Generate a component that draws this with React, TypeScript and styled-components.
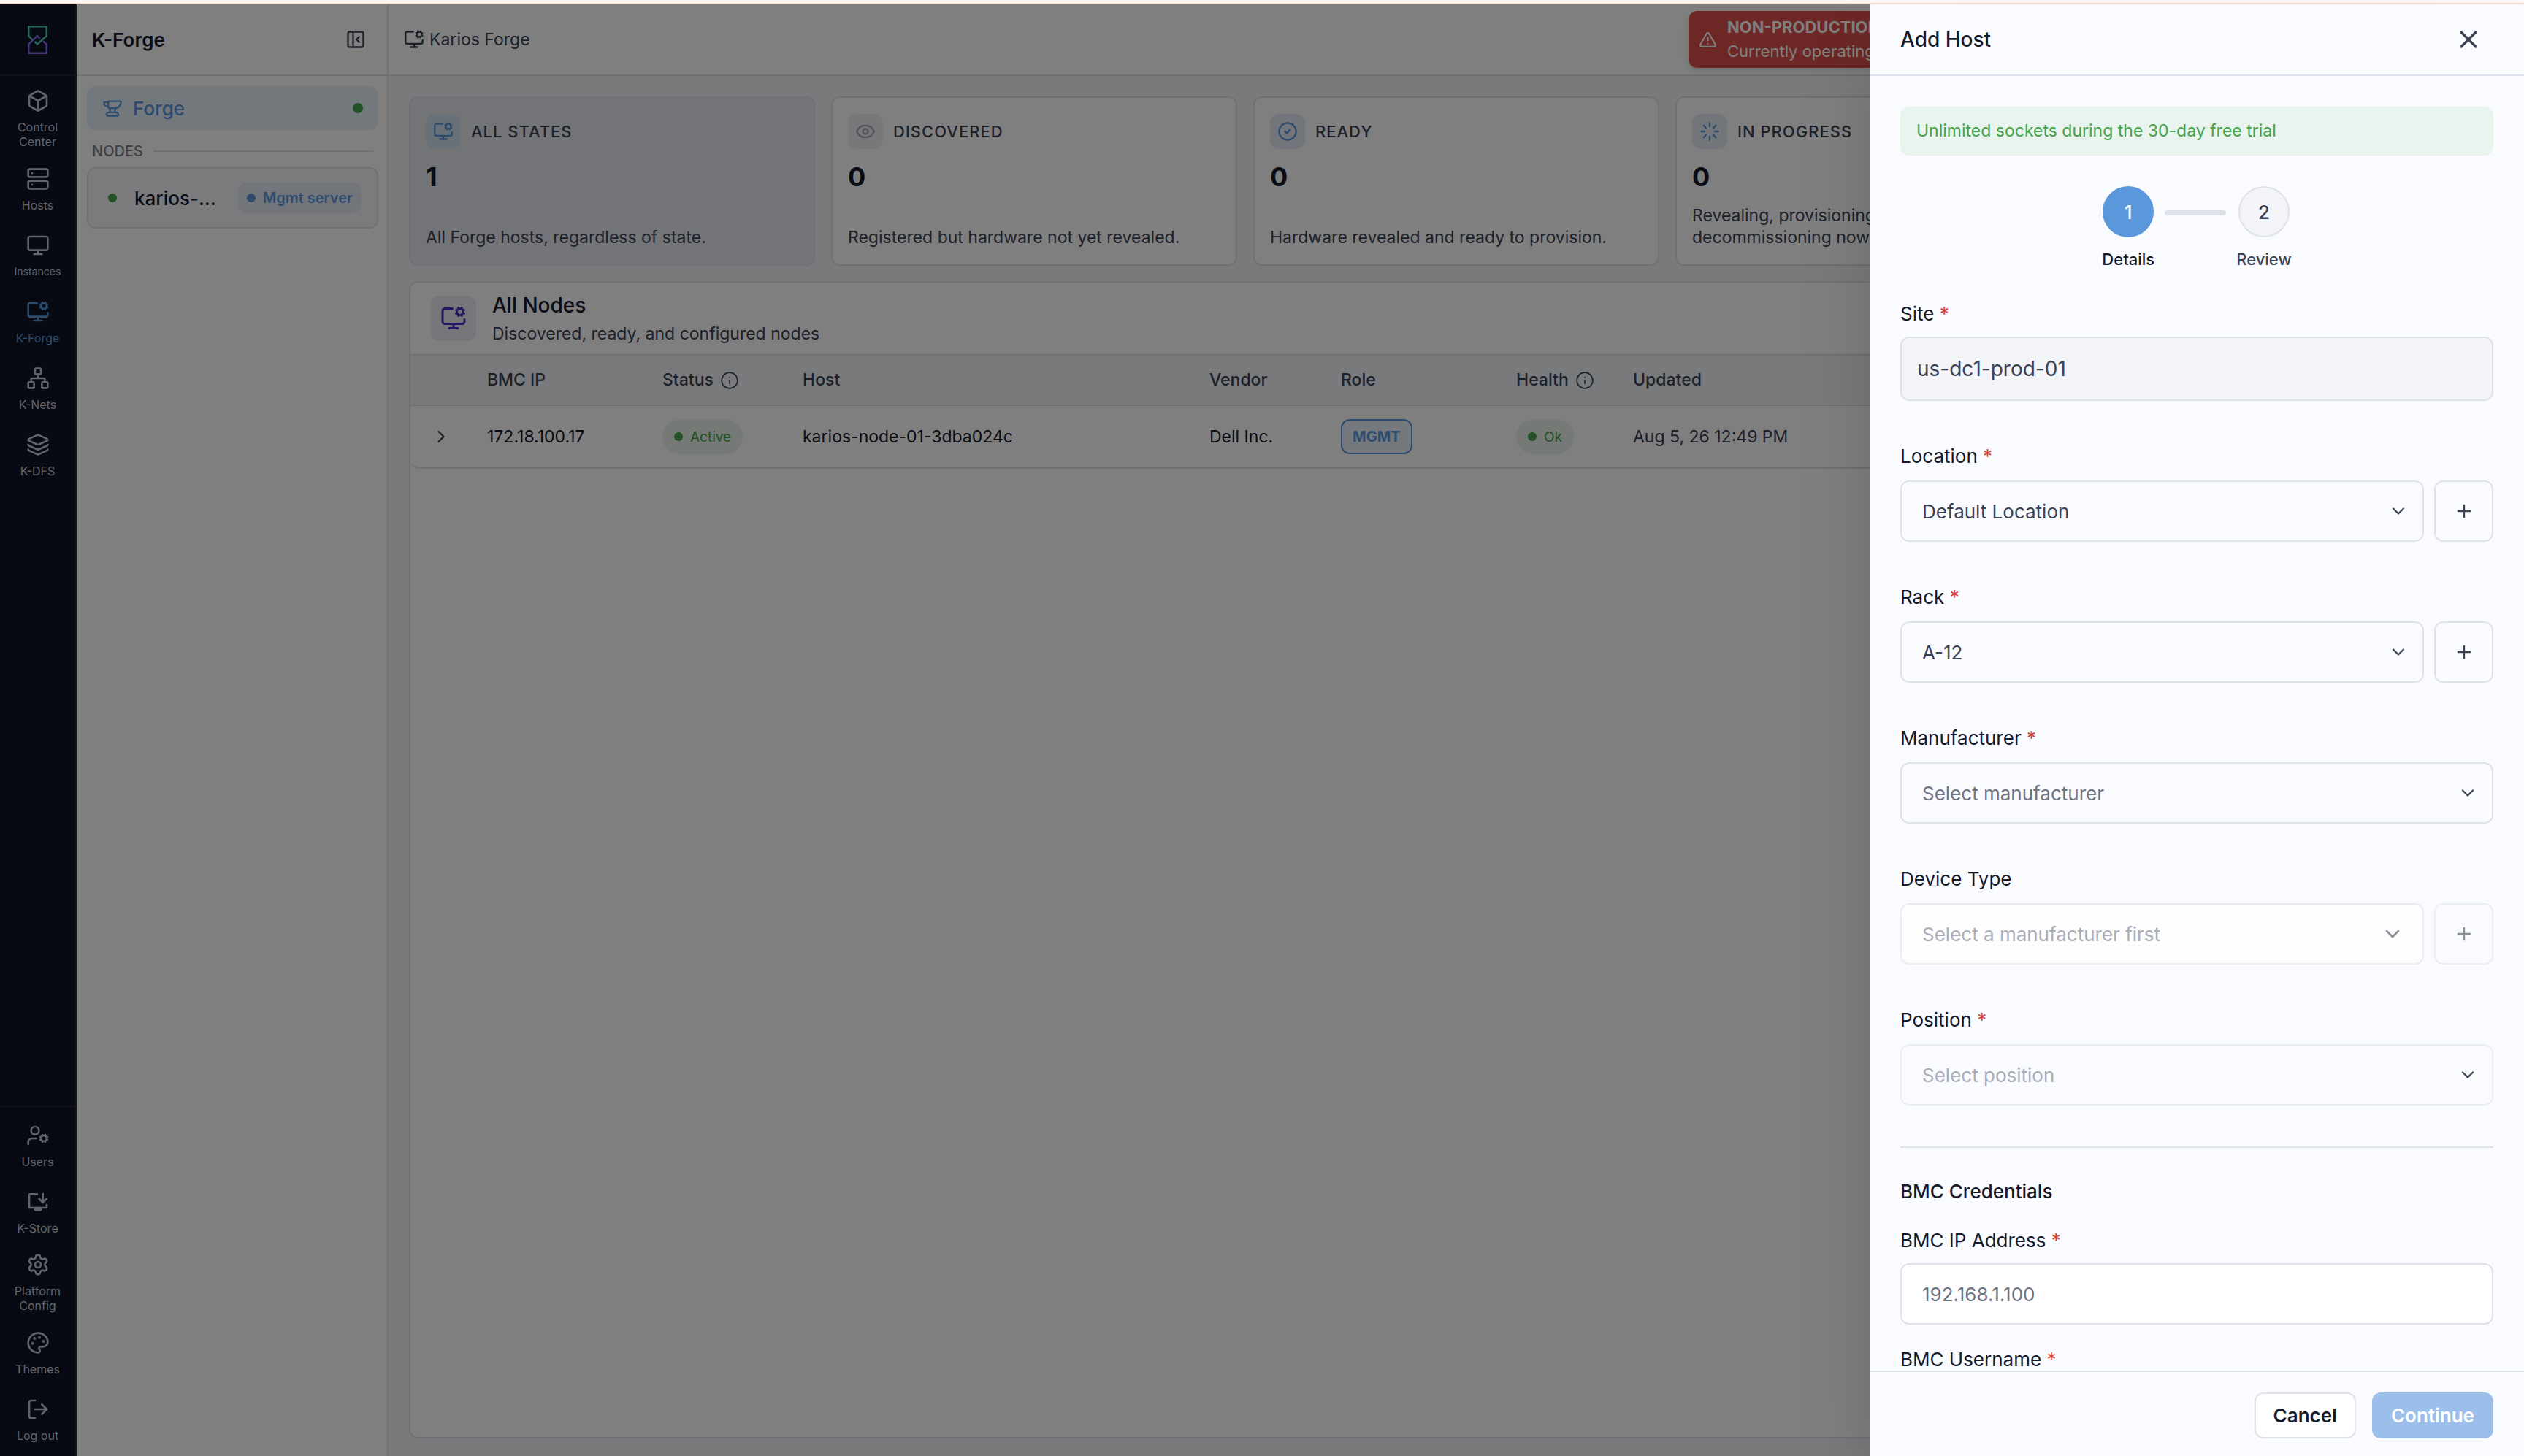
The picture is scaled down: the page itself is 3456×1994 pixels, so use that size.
import React, { useId } from "react";
import styled, { createGlobalStyle, css } from "styled-components";
import {
  Anvil,
  Box,
  ChevronDown,
  ChevronRight,
  CircleCheck,
  Eye,
  Info,
  Layers,
  Loader,
  LogOut,
  Monitor,
  MonitorCog,
  Network,
  Palette,
  PanelLeftClose,
  Plus,
  Server,
  Settings,
  TriangleAlert,
  UserCog,
  X,
} from "lucide-react";
import { MdInstallDesktop } from "react-icons/md";

const color = {
  ink: "#151a2b",
  text: "#3b4254",
  muted: "#6e7482",
  line: "#dfe2eb",
  surface: "#ffffff",
  canvas: "#f2f4f8",
  primary: "#5a97db",
  green: "#46a24d",
  red: "#d9403a",
  rail: "#0e1426",
};

const GlobalStyle = createGlobalStyle`
  *, *::before, *::after { box-sizing: border-box; }
  body {
    margin: 0;
    background: ${color.canvas};
    color: ${color.ink};
    font-family: Inter, "Liberation Sans", sans-serif;
    font-size: 26px;
    line-height: 39px;
  }
  button, input, select { font: inherit; color: inherit; margin: 0; }
  h1, h2, h3, p, ul, ol { margin: 0; padding: 0; }
  ul, ol { list-style: none; }
  svg { display: block; flex: none; }
`;

/* ---------- shell ---------- */

const Page = styled.div`
  display: flex;
  flex-direction: column;
  height: 100vh;
  overflow: hidden;
`;

const TopStrip = styled.div`
  flex: none;
  height: 6px;
  background: #fff9f6;
  border-bottom: 2px solid #f3ded3;
`;

const Shell = styled.div`
  position: relative;
  flex: 1;
  min-height: 0;
  display: flex;
`;

/* ---------- navigation rail ---------- */

const Rail = styled.nav`
  flex: none;
  width: 105px;
  display: flex;
  flex-direction: column;
  background: ${color.rail};
  border-right: 2px solid #20263a;
`;

const RailLogo = styled.div`
  height: 98px;
  display: flex;
  align-items: center;
  justify-content: center;
  border-bottom: 2px solid #20242f;
`;

const RailGroup = styled.ul`
  padding: 8px 0;
`;

const RailFooter = styled(RailGroup)`
  margin-top: auto;
  padding-bottom: 4px;
  border-top: 2px solid #20242f;
`;

const RailLink = styled.a<{ $active?: boolean; $small?: boolean }>`
  display: flex;
  flex-direction: column;
  align-items: center;
  justify-content: center;
  gap: 10px;
  min-height: 91px;
  padding: 10px 16px;
  color: ${(p) => (p.$active ? color.primary : "#c4c9d4")};
  font-size: ${(p) => (p.$small ? 14 : 16)}px;
  line-height: 20px;
  text-align: center;
  text-decoration: none;
`;

/* ---------- secondary panel ---------- */

const SidePanel = styled.aside`
  flex: none;
  width: 427px;
  background: ${color.surface};
  border-right: 2px solid ${color.line};
`;

const PanelHeader = styled.header`
  height: 98px;
  display: flex;
  align-items: center;
  justify-content: space-between;
  padding: 0 29px 0 21px;
  border-bottom: 2px solid ${color.line};
`;

const PanelTitle = styled.h1`
  font-size: 26px;
  line-height: 39px;
  font-weight: 600;
`;

const IconButton = styled.button`
  display: flex;
  align-items: center;
  justify-content: center;
  padding: 0;
  border: 0;
  background: none;
  color: ${color.text};
`;

const PanelBody = styled.div`
  padding: 14px 12px 14px 14px;
`;

const ForgeLink = styled.a`
  display: flex;
  align-items: center;
  gap: 14px;
  height: 60px;
  padding: 0 21px;
  border-radius: 12px;
  background: #e6f0fa;
  color: ${color.primary};
  font-weight: 500;
  text-decoration: none;
`;

const Dot = styled.span<{ $size: number; $color: string }>`
  flex: none;
  width: ${(p) => p.$size}px;
  height: ${(p) => p.$size}px;
  border-radius: 50%;
  background: ${(p) => p.$color};
`;

const Grow = styled.span`
  flex: 1;
`;

const SectionLabel = styled.h2`
  display: flex;
  align-items: center;
  gap: 14px;
  margin: 15px 7px 8px;
  color: #7c8290;
  font-size: 20px;
  line-height: 28px;
  font-weight: 500;

  &::after {
    content: "";
    flex: 1;
    height: 2px;
    background: ${color.line};
  }
`;

const NodeLink = styled.a`
  display: flex;
  align-items: center;
  height: 84px;
  padding: 0 21px 0 27px;
  border: 2px solid ${color.line};
  border-radius: 12px;
  background: #f6f7fa;
  color: ${color.ink};
  font-weight: 500;
  text-decoration: none;
`;

const NodeName = styled.span`
  flex: 1;
  min-width: 0;
  padding-left: 24px;
`;

const ServerBadge = styled.span`
  display: flex;
  align-items: center;
  gap: 10px;
  height: 42px;
  padding: 0 12px;
  border-radius: 12px;
  background: #e4ecf6;
  color: ${color.primary};
  font-size: 20px;
  font-weight: 600;
  white-space: nowrap;
`;

/* ---------- main area ---------- */

const Main = styled.main`
  flex: 1;
  min-width: 0;
  display: flex;
  flex-direction: column;
`;

const MainHeader = styled.header`
  flex: none;
  height: 98px;
  display: flex;
  align-items: center;
  justify-content: space-between;
  padding: 0 21px;
  background: ${color.surface};
  border-bottom: 2px solid ${color.line};
`;

const Crumb = styled.div`
  display: flex;
  align-items: center;
  gap: 7px;
  color: ${color.text};
  font-size: 23px;
`;

const Notice = styled.div`
  flex: 0 1 1123px;
  display: flex;
  align-items: center;
  gap: 14px;
  height: 78px;
  padding: 0 14px;
  border-radius: 12px;
  background: #da504c;
  color: #ffffff;
  font-size: 22px;
  line-height: 33px;
  box-shadow: 0 4px 12px rgba(0, 0, 0, 0.12);
`;

const NoticeTitle = styled.strong`
  display: block;
  font-weight: 700;
`;

const Content = styled.div`
  flex: 1;
  min-height: 0;
  display: flex;
  flex-direction: column;
  gap: 21px;
  padding: 28px 28px 24px;
`;

const StatGrid = styled.div`
  display: grid;
  grid-template-columns: repeat(5, minmax(0, 1fr));
  gap: 22px;
`;

const StatCard = styled.button<{ $selected?: boolean }>`
  display: flex;
  flex-direction: column;
  align-items: stretch;
  min-height: 232px;
  padding: 22px 21px;
  border: 2px solid ${color.line};
  border-radius: 12px;
  background: ${(p) => (p.$selected ? "#e7e9f1" : color.surface)};
  text-align: left;
`;

const StatHead = styled.span`
  display: flex;
  align-items: center;
  gap: 14px;
  color: ${color.text};
  font-size: 22px;
  font-weight: 500;
  letter-spacing: 1px;
`;

const StatIcon = styled.span<{ $bg: string; $fg: string }>`
  display: flex;
  align-items: center;
  justify-content: center;
  width: 48px;
  height: 48px;
  border-radius: 12px;
  background: ${(p) => p.$bg};
  color: ${(p) => p.$fg};
`;

const StatValue = styled.span`
  margin-top: 16px;
  color: ${color.ink};
  font-size: 36px;
  line-height: 44px;
  font-weight: 700;
`;

const StatText = styled.span`
  margin-top: auto;
  color: ${color.text};
  font-size: 23px;
  line-height: 30px;
`;

const TableCard = styled.section`
  flex: 1;
  min-height: 0;
  border: 2px solid ${color.line};
  border-radius: 12px;
  background: ${color.surface};
  overflow: hidden;
`;

const TableHeader = styled.header`
  display: flex;
  align-items: center;
  gap: 22px;
  height: 100px;
  padding: 0 28px;
  border-bottom: 2px solid #e0e0ea;
`;

const TableIcon = styled.span`
  display: flex;
  align-items: center;
  justify-content: center;
  width: 62px;
  height: 62px;
  border-radius: 12px;
  background: #eeeef6;
  color: #4f2fc4;
`;

const TableTitle = styled.h2`
  font-size: 28px;
  line-height: 42px;
  font-weight: 500;
`;

const TableText = styled.p`
  color: ${color.text};
  font-size: 23px;
  line-height: 36px;
`;

const TableWrap = styled.div`
  border-bottom: 2px solid #e0e0ea;
  border-radius: 0 0 12px 12px;
  overflow: hidden;
`;

const Table = styled.table`
  width: 100%;
  table-layout: fixed;
  border-collapse: collapse;
  font-size: 23px;
  text-align: left;
`;

const Col = styled.col<{ $width?: number }>`
  width: ${(p) => (p.$width ? `${p.$width}px` : "auto")};
`;

const Th = styled.th`
  height: 68px;
  padding: 0;
  border-bottom: 2px solid #e0e0ea;
  background: ${color.canvas};
  color: ${color.text};
  font-weight: 500;
`;

const ThLabel = styled.span`
  display: flex;
  align-items: center;
  gap: 9px;
`;

const Td = styled.td<{ $soft?: boolean }>`
  height: 85px;
  padding: 0;
  color: ${(p) => (p.$soft ? color.text : color.ink)};
`;

const Expand = styled(IconButton)`
  margin-left: 28px;
`;

const StatusPill = styled.span`
  display: inline-flex;
  align-items: center;
  gap: 10px;
  height: 48px;
  padding: 0 16px;
  border-radius: 24px;
  background: #eaf4ec;
  color: ${color.green};
  font-size: 19px;
  vertical-align: middle;
`;

const RoleTag = styled.span`
  display: inline-flex;
  align-items: center;
  height: 48px;
  padding: 0 14px;
  border: 2px solid ${color.primary};
  border-radius: 12px;
  background: #eaf2fb;
  color: ${color.primary};
  font-size: 20px;
  font-weight: 700;
  vertical-align: middle;
`;

/* ---------- drawer ---------- */

const Overlay = styled.div`
  position: absolute;
  inset: 0;
  display: flex;
  justify-content: flex-end;
  background: rgba(0, 0, 0, 0.5);
`;

const Drawer = styled.section`
  display: flex;
  flex-direction: column;
  width: 896px;
  max-width: 100%;
  background: #fafbfe;
  box-shadow: 0 50px 100px -24px rgba(0, 0, 0, 0.25);
`;

const DrawerHeader = styled.header`
  flex: none;
  display: flex;
  align-items: center;
  justify-content: space-between;
  height: 98px;
  padding: 0 42px;
  border-bottom: 2px solid #dde3ec;
`;

const DrawerTitle = styled.h2`
  font-size: 28px;
  font-weight: 500;
`;

const CloseButton = styled(IconButton)`
  width: 68px;
  height: 68px;
`;

const DrawerBody = styled.form`
  flex: 1;
  min-height: 0;
  padding: 42px 42px 0;
  overflow-y: auto;
  scrollbar-width: none;
`;

const TrialNote = styled.p`
  padding: 14px 22px;
  border-radius: 12px;
  background: #eaf4ee;
  color: ${color.green};
  font-size: 23px;
`;

const Steps = styled.ol`
  display: flex;
  justify-content: center;
  gap: 14px;
  margin: 42px 0 38px;
`;

const Step = styled.li<{ $current?: boolean }>`
  display: flex;
  flex-direction: column;
  align-items: center;
  gap: 14px;
  color: ${(p) => (p.$current ? color.ink : color.text)};
  font-size: 22px;
  line-height: 33px;
  font-weight: 500;
`;

const StepCircle = styled.span<{ $current?: boolean }>`
  display: flex;
  align-items: center;
  justify-content: center;
  width: 70px;
  height: 70px;
  border: 2px solid ${(p) => (p.$current ? color.primary : color.line)};
  border-radius: 50%;
  background: ${(p) => (p.$current ? color.primary : "#f3f4f8")};
  color: ${(p) => (p.$current ? "#ffffff" : color.text)};
  font-size: 26px;
`;

const StepLine = styled.li`
  width: 84px;
  height: 7px;
  margin-top: 33px;
  border-radius: 4px;
  background: #dde1ea;
`;

const FieldBox = styled.div<{ $gap: number }>`
  display: flex;
  flex-direction: column;
  gap: ${(p) => p.$gap}px;
`;

const Label = styled.label`
  font-weight: 400;
`;

const Required = styled.span`
  color: ${color.red};
`;

const FieldRow = styled.div`
  display: flex;
  gap: 14px;
`;

const SelectBox = styled.div`
  position: relative;
  flex: 1;
`;

const controlFrame = css`
  width: 100%;
  height: 84px;
  border: 2px solid ${color.line};
  border-radius: 12px;
  outline: 0;
`;

const Select = styled.select<{ $tone: "value" | "empty" | "faded" | "off" }>`
  ${controlFrame}
  display: block;
  padding: 0 64px 0 28px;
  appearance: none;
  background: ${(p) => (p.$tone === "off" ? "#fdfdfe" : "#fafbfe")};
  border-color: ${(p) =>
    p.$tone === "off" || p.$tone === "faded" ? "#ebedf4" : color.line};
  color: ${(p) =>
    p.$tone === "value"
      ? color.text
      : p.$tone === "empty"
        ? color.muted
        : "#a9adb7"};
  opacity: 1;
`;

const Chevron = styled.span<{ $large?: boolean }>`
  position: absolute;
  inset: 0 ${(p) => (p.$large ? 27 : 21)}px 0 auto;
  display: flex;
  align-items: center;
  color: ${(p) => (p.$large ? "#8a8e98" : color.text)};
  pointer-events: none;
`;

const AddButton = styled.button`
  flex: none;
  display: flex;
  align-items: center;
  justify-content: center;
  width: 81px;
  height: 84px;
  padding: 0;
  border: 2px solid ${color.line};
  border-radius: 12px;
  background: #fafbfe;
  color: ${color.text};

  &:disabled {
    border-color: #ebedf4;
    color: #8a8e98;
  }
`;

const TextInput = styled.input`
  ${controlFrame}
  padding: 0 28px;
  background: #ffffff;

  &::placeholder {
    color: ${color.muted};
    opacity: 1;
  }
`;

const ReadOnlyInput = styled.input`
  ${controlFrame}
  height: 88px;
  padding: 0 21px;
  background: #f3f4f8;
  color: ${color.text};
  font-size: 28px;
`;

const FieldStack = styled.div`
  display: flex;
  flex-direction: column;
  gap: 56px;
`;

const Credentials = styled.div`
  display: flex;
  flex-direction: column;
  gap: 28px;
  margin-top: 56px;
  padding: 40px 0 42px;
  border-top: 2px solid ${color.line};
`;

const SectionTitle = styled.h3`
  font-size: 26px;
  line-height: 39px;
  font-weight: 500;
`;

const DrawerFooter = styled.footer`
  flex: none;
  display: flex;
  justify-content: flex-end;
  gap: 22px;
  padding: 28px 42px 24px;
  border-top: 2px solid #dde3ec;
`;

const ActionButton = styled.button<{ $primary?: boolean }>`
  height: 63px;
  padding: 0 24px;
  border: 2px solid ${(p) => (p.$primary ? "#9bbfea" : color.line)};
  border-radius: 12px;
  background: ${(p) => (p.$primary ? "#9bbfea" : "#ffffff")};
  color: ${(p) => (p.$primary ? "#ffffff" : color.ink)};
  font-weight: 600;
`;

/* ---------- parts ---------- */

function Logo() {
  return (
    <svg width="27" height="39" viewBox="0 0 27 39" fill="none" strokeWidth="2.4">
      <path d="M21 21.2 25.7 26V37.7H1.3V25.6L13 14l3.6 3.8" stroke="#8b6cf2" />
      <path d="M6.2 19.4 1.3 14.2V1.3h24.4v12.9L13 25.6l-3.4-3.8" stroke="#50d2c2" />
    </svg>
  );
}

const mainNav = [
  { label: "Control Center", icon: <Box size={32} /> },
  { label: "Hosts", icon: <Server size={32} /> },
  { label: "Instances", icon: <Monitor size={32} />, small: true },
  { label: "K-Forge", icon: <MonitorCog size={32} />, active: true },
  { label: "K-Nets", icon: <Network size={32} /> },
  { label: "K-DFS", icon: <Layers size={32} /> },
];

const footerNav = [
  { label: "Users", icon: <UserCog size={32} /> },
  { label: "K-Store", icon: <MdInstallDesktop size={32} /> },
  { label: "Platform Config", icon: <Settings size={32} /> },
  { label: "Themes", icon: <Palette size={32} /> },
  { label: "Log out", icon: <LogOut size={32} /> },
];

type NavItem = {
  label: string;
  icon: React.ReactNode;
  small?: boolean;
  active?: boolean;
};

function NavItems({ items }: { items: NavItem[] }) {
  return (
    <>
      {items.map((item) => (
        <li key={item.label}>
          <RailLink href="#" $active={item.active} $small={item.small}>
            {item.icon}
            {item.label}
          </RailLink>
        </li>
      ))}
    </>
  );
}

const stats = [
  {
    title: "ALL STATES",
    value: 1,
    text: "All Forge hosts, regardless of state.",
    icon: <MonitorCog size={28} />,
    bg: "#d5e1f0",
    fg: color.primary,
    selected: true,
  },
  {
    title: "DISCOVERED",
    value: 0,
    text: "Registered but hardware not yet revealed.",
    icon: <Eye size={28} />,
    bg: "#f0f1f4",
    fg: "#a0a4ae",
  },
  {
    title: "READY",
    value: 0,
    text: "Hardware revealed and ready to provision.",
    icon: <CircleCheck size={28} />,
    bg: "#e4ecf6",
    fg: color.primary,
  },
  {
    title: "IN PROGRESS",
    value: 0,
    text: "Revealing, provisioning, configuring, or decommissioning now.",
    icon: <Loader size={28} />,
    bg: "#e4ecf6",
    fg: color.primary,
  },
];

function FieldLabel({
  id,
  text,
  required,
}: {
  id: string;
  text: string;
  required?: boolean;
}) {
  return (
    <Label htmlFor={id}>
      {text}
      {required && <Required> *</Required>}
    </Label>
  );
}

function SelectField({
  label,
  value,
  tone,
  required,
  addLabel,
}: {
  label: string;
  value: string;
  tone: "value" | "empty" | "faded" | "off";
  required?: boolean;
  addLabel?: string;
}) {
  const id = useId();
  const off = tone === "off";
  return (
    <FieldBox $gap={14}>
      <FieldLabel id={id} text={label} required={required} />
      <FieldRow>
        <SelectBox>
          <Select id={id} $tone={tone} disabled={off || tone === "faded"}>
            <option>{value}</option>
          </Select>
          <Chevron $large={off}>
            <ChevronDown size={off ? 32 : 28} />
          </Chevron>
        </SelectBox>
        {addLabel && (
          <AddButton type="button" aria-label={addLabel} disabled={off}>
            <Plus size={28} />
          </AddButton>
        )}
      </FieldRow>
    </FieldBox>
  );
}

export default function App() {
  return (
    <>
      <GlobalStyle />
      <Page>
        <TopStrip />
        <Shell>
          <Rail>
            <RailLogo>
              <Logo />
            </RailLogo>
            <RailGroup>
              <NavItems items={mainNav} />
            </RailGroup>
            <RailFooter>
              <NavItems items={footerNav} />
            </RailFooter>
          </Rail>

          <SidePanel>
            <PanelHeader>
              <PanelTitle>K-Forge</PanelTitle>
              <IconButton aria-label="Collapse panel">
                <PanelLeftClose size={28} />
              </IconButton>
            </PanelHeader>
            <PanelBody>
              <ForgeLink href="#">
                <Anvil size={28} />
                Forge
                <Grow />
                <Dot $size={14} $color={color.green} />
              </ForgeLink>
              <SectionLabel>NODES</SectionLabel>
              <NodeLink href="#">
                <Dot $size={12} $color={color.green} />
                <NodeName>karios-...</NodeName>
                <ServerBadge>
                  <Dot $size={12} $color={color.primary} />
                  Mgmt server
                </ServerBadge>
              </NodeLink>
            </PanelBody>
          </SidePanel>

          <Main>
            <MainHeader>
              <Crumb>
                <MonitorCog size={28} />
                Karios Forge
              </Crumb>
              <Notice>
                <TriangleAlert size={25} />
                <div>
                  <NoticeTitle>NON-PRODUCTION</NoticeTitle>
                  Currently operating
                </div>
              </Notice>
            </MainHeader>
            <Content>
              <StatGrid>
                {stats.map((s) => (
                  <StatCard key={s.title} $selected={s.selected}>
                    <StatHead>
                      <StatIcon $bg={s.bg} $fg={s.fg}>
                        {s.icon}
                      </StatIcon>
                      {s.title}
                    </StatHead>
                    <StatValue>{s.value}</StatValue>
                    <StatText>{s.text}</StatText>
                  </StatCard>
                ))}
              </StatGrid>

              <TableCard>
                <TableHeader>
                  <TableIcon>
                    <MonitorCog size={36} />
                  </TableIcon>
                  <div>
                    <TableTitle>All Nodes</TableTitle>
                    <TableText>Discovered, ready, and configured nodes</TableText>
                  </div>
                </TableHeader>
                <TableWrap>
                  <Table>
                    <colgroup>
                      <Col $width={105} />
                      <Col $width={240} />
                      <Col $width={192} />
                      <Col $width={557} />
                      <Col $width={180} />
                      <Col $width={240} />
                      <Col $width={160} />
                      <Col />
                    </colgroup>
                    <thead>
                      <tr>
                        <Th aria-label="Expand" />
                        <Th>BMC IP</Th>
                        <Th>
                          <ThLabel>
                            Status <Info size={26} strokeWidth={1.5} />
                          </ThLabel>
                        </Th>
                        <Th>Host</Th>
                        <Th>Vendor</Th>
                        <Th>Role</Th>
                        <Th>
                          <ThLabel>
                            Health <Info size={26} strokeWidth={1.5} />
                          </ThLabel>
                        </Th>
                        <Th>Updated</Th>
                      </tr>
                    </thead>
                    <tbody>
                      <tr>
                        <Td>
                          <Expand aria-label="Expand row">
                            <ChevronRight size={28} />
                          </Expand>
                        </Td>
                        <Td>172.18.100.17</Td>
                        <Td>
                          <StatusPill>
                            <Dot $size={12} $color={color.green} />
                            Active
                          </StatusPill>
                        </Td>
                        <Td>karios-node-01-3dba024c</Td>
                        <Td>Dell Inc.</Td>
                        <Td>
                          <RoleTag>MGMT</RoleTag>
                        </Td>
                        <Td>
                          <StatusPill>
                            <Dot $size={12} $color={color.green} />
                            Ok
                          </StatusPill>
                        </Td>
                        <Td $soft>Aug 5, 26 12:49 PM</Td>
                      </tr>
                    </tbody>
                  </Table>
                </TableWrap>
              </TableCard>
            </Content>
          </Main>

          <Overlay>
            <Drawer role="dialog" aria-label="Add Host">
              <DrawerHeader>
                <DrawerTitle>Add Host</DrawerTitle>
                <CloseButton aria-label="Close">
                  <X size={40} />
                </CloseButton>
              </DrawerHeader>
              <DrawerBody>
                <TrialNote>Unlimited sockets during the 30-day free trial</TrialNote>
                <Steps>
                  <Step $current>
                    <StepCircle $current>1</StepCircle>
                    Details
                  </Step>
                  <StepLine aria-hidden="true" />
                  <Step>
                    <StepCircle>2</StepCircle>
                    Review
                  </Step>
                </Steps>
                <FieldStack>
                  <FieldBox $gap={12}>
                    <FieldLabel id="site" text="Site" required />
                    <ReadOnlyInput id="site" defaultValue="us-dc1-prod-01" readOnly />
                  </FieldBox>
                  <SelectField
                    label="Location"
                    value="Default Location"
                    tone="value"
                    required
                    addLabel="Add location"
                  />
                  <SelectField
                    label="Rack"
                    value="A-12"
                    tone="value"
                    required
                    addLabel="Add rack"
                  />
                  <SelectField
                    label="Manufacturer"
                    value="Select manufacturer"
                    tone="empty"
                    required
                  />
                  <SelectField
                    label="Device Type"
                    value="Select a manufacturer first"
                    tone="off"
                    addLabel="Add device type"
                  />
                  <SelectField
                    label="Position"
                    value="Select position"
                    tone="faded"
                    required
                  />
                </FieldStack>
                <Credentials>
                  <SectionTitle>BMC Credentials</SectionTitle>
                  <FieldBox $gap={12}>
                    <FieldLabel id="bmc-ip" text="BMC IP Address" required />
                    <TextInput id="bmc-ip" placeholder="192.168.1.100" />
                  </FieldBox>
                  <FieldBox $gap={12}>
                    <FieldLabel id="bmc-user" text="BMC Username" required />
                    <TextInput id="bmc-user" />
                  </FieldBox>
                </Credentials>
              </DrawerBody>
              <DrawerFooter>
                <ActionButton type="button">Cancel</ActionButton>
                <ActionButton type="button" $primary disabled>
                  Continue
                </ActionButton>
              </DrawerFooter>
            </Drawer>
          </Overlay>
        </Shell>
      </Page>
    </>
  );
}
